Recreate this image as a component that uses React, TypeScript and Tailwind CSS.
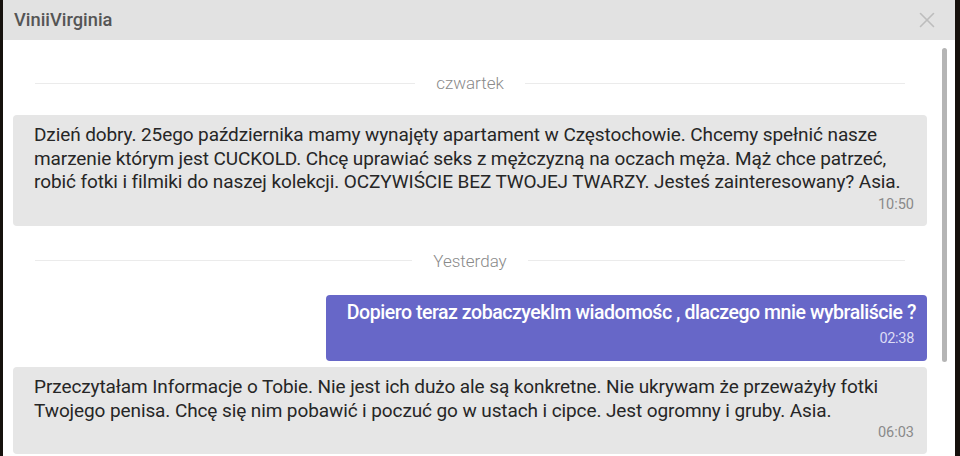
import { X } from "lucide-react";

interface Message {
  lines: string[];
  time: string;
  mine?: boolean;
}

function DateSeparator({ label, className }: { label: string; className?: string }) {
  return (
    <div className={`flex items-center h-[24px] px-[22px] ${className ?? ""}`}>
      <div className="flex-1 h-px bg-[#ebebeb]" />
      <span className="px-[21px] text-[17px] font-light text-[#8a8a8a] leading-[24px]">
        {label}
      </span>
      <div className="flex-1 h-px bg-[#ebebeb]" />
    </div>
  );
}

function Bubble({ msg, className }: { msg: Message; className?: string }) {
  if (msg.mine) {
    return (
      <div
        className={`ml-auto w-fit rounded-[4px] bg-[#6767c8] pl-[21px] pr-[11px] pt-[6px] pb-[13px] text-right ${className ?? ""}`}
      >
        <p className="text-[19.5px] leading-[23.5px] font-medium text-white tracking-[-0.45px]">
          {msg.lines.join(" ")}
        </p>
        <p className="mt-[6px] pr-[2px] text-[14.5px] leading-[18px] text-[#dcdcf5] tracking-[-0.3px]">
          {msg.time}
        </p>
      </div>
    );
  }
  return (
    <div
      className={`rounded-[4px] bg-[#e6e6e6] pl-[21px] pr-[11px] pt-[8px] pb-[12px] ${className ?? ""}`}
    >
      <p className="text-[19px] leading-[23.5px] text-[#262626] tracking-[-0.1px]">
        {msg.lines.map((line, i) => (
          <span key={i} className="block whitespace-nowrap">
            {line}
          </span>
        ))}
      </p>
      <p className="mt-[2px] pr-[2px] text-right text-[14.5px] leading-[18px] text-[#8a8a8a]">
        {msg.time}
      </p>
    </div>
  );
}

export default function App() {
  return (
    <div
      className="w-[960px] h-[456px] flex bg-[#16110d] overflow-hidden"
      style={{ fontFamily: "Roboto, 'Noto Sans', sans-serif" }}
    >
      <div className="w-[3px] shrink-0" />
      <div className="flex-1 flex flex-col bg-white">
        {/* Header */}
        <div className="h-[40px] shrink-0 bg-[#e2e2e2] flex items-center justify-between pl-[11px] pr-[15px]">
          <h1 className="text-[18.3px] font-medium text-[#555]">ViniiVirginia</h1>
          <X className="w-[26px] h-[26px] text-[#bdbdbd]" strokeWidth={1.5} />
        </div>

        {/* Messages */}
        <div className="relative flex-1 overflow-hidden pl-[10px] pr-[28px]">
          <DateSeparator label="czwartek" className="mt-[31px] mb-[20px]" />
          <Bubble
            msg={{
              lines: [
                "Dzień dobry. 25ego października mamy wynajęty apartament w Częstochowie. Chcemy spełnić nasze",
                "marzenie którym jest CUCKOLD. Chcę uprawiać seks z mężczyzną na oczach męża. Mąż chce patrzeć,",
                "robić fotki i filmiki do naszej kolekcji. OCZYWIŚCIE BEZ TWOJEJ TWARZY. Jesteś zainteresowany? Asia.",
              ],
              time: "10:50",
            }}
          />
          <DateSeparator label="Yesterday" className="mt-[23px] mb-[22px]" />
          <Bubble
            msg={{
              lines: ["Dopiero teraz zobaczyeklm wiadomośc , dlaczego mnie wybraliście ?"],
              time: "02:38",
              mine: true,
            }}
          />
          <Bubble
            className="mt-[6px]"
            msg={{
              lines: [
                "Przeczytałam Informacje o Tobie. Nie jest ich dużo ale są konkretne. Nie ukrywam że przeważyły fotki",
                "Twojego penisa. Chcę się nim pobawić i poczuć go w ustach i cipce. Jest ogromny i gruby. Asia.",
              ],
              time: "06:03",
            }}
          />

          {/* Scrollbar */}
          <div className="absolute right-[8px] top-[8px] w-[5px] h-[314px] rounded-full bg-[#b5b5b5]" />
        </div>
      </div>
      <div className="w-[5px] shrink-0" />
    </div>
  );
}
